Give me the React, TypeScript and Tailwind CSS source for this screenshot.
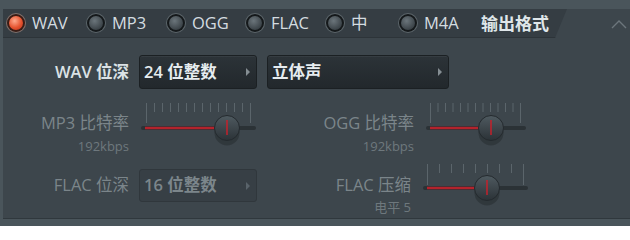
import React from "react";

type SliderProps = {
  width: number;
  ticks: number[];
  trackEnd: number;
  redEnd: number;
  knob: number;
  trackY: number;
  tallBottom: number;
};

function Slider({ width, ticks, trackEnd, redEnd, knob, trackY, tallBottom }: SliderProps) {
  return (
    <svg width={width} height={52} className="shrink-0">
      <defs>
        <linearGradient id="knobFill" x1="0" y1="0" x2="0" y2="1">
          <stop offset="0" stopColor="#4f5a60" />
          <stop offset="1" stopColor="#2b3237" />
        </linearGradient>
      </defs>
      {ticks.map((x, i) => (
        <line
          key={i}
          x1={x}
          x2={x}
          y1={2}
          y2={i === 0 || i === ticks.length - 1 ? tallBottom : 11}
          stroke="#5b656b"
          strokeWidth={1}
        />
      ))}
      <rect x={0} y={trackY - 2} width={trackEnd} height={4} rx={2} fill="#2b3236" />
      <rect x={4} y={trackY - 1.25} width={redEnd - 4} height={2.5} fill="#b3232c" />
      <circle cx={knob} cy={trackY + 5} r={12.5} fill="#000" opacity={0.2} />
      <circle cx={knob} cy={trackY} r={12.5} fill="url(#knobFill)" stroke="#242a2e" strokeWidth={1} />
      <line x1={knob} x2={knob} y1={trackY - 8} y2={trackY + 7} stroke="#c4212b" strokeWidth={1.5} />
    </svg>
  );
}

function Radio({ label, active, w }: { label: string; active?: boolean; w: string }) {
  return (
    <div className={`flex items-center gap-[6px] ${w}`}>
      <span
        className={`flex h-5 w-5 items-center justify-center rounded-full ${
          active ? "bg-[#7d706c]" : "bg-[#5b6469]"
        }`}
      >
        <span
          className={`flex h-[18px] w-[18px] items-center justify-center rounded-full ${
            active ? "bg-[#3b1c15]" : "bg-[#15191b]"
          }`}
        >
          <span
            className={`h-[14px] w-[14px] rounded-full ${
              active
                ? "bg-[radial-gradient(circle_at_40%_35%,#ffa98c,#e5532f_55%,#b5301a)]"
                : "bg-[radial-gradient(circle_at_40%_35%,#6b757b,#3c4449_70%,#30373b)]"
            }`}
          />
        </span>
      </span>
      <span className="text-[16.5px] leading-none text-[#d4dce0]">{label}</span>
    </div>
  );
}

function Dropdown({ text, w, disabled }: { text: string; w: string; disabled?: boolean }) {
  return (
    <div
      className={`flex h-full items-center justify-between rounded-[3px] border pl-[4px] pr-[6px] ${w} ${
        disabled
          ? "border-[#30373c] bg-[#373f45]"
          : "border-[#1b2023] bg-[linear-gradient(#2c3338,#22282c)] shadow-[inset_0_1px_0_rgba(255,255,255,0.05)]"
      }`}
    >
      <span
        className={`text-[16.5px] font-semibold leading-none ${
          disabled ? "text-[#7c868b]" : "text-[#e6ecef]"
        }`}
      >
        {text}
      </span>
      <svg width="4" height="8" viewBox="0 0 4 8">
        <path d="M0 0 L4 4 L0 8 Z" fill={disabled ? "#59636a" : "#858e93"} />
      </svg>
    </div>
  );
}

export default function App() {
  return (
    <div className="h-[226px] w-[630px] overflow-hidden bg-[#4a555b] pl-[3px] pt-[9px] font-['Open_Sans','Noto_Sans_CJK_SC',sans-serif]">
      <div className="border-b border-[#30383d] bg-[#3d464c]">
        <div className="flex h-[29px]">
          <div className="flex w-[564px] items-center border-b border-[#2d3439] bg-[#353d43] pl-[3px] [clip-path:polygon(0_0,100%_0,calc(100%-12px)_100%,0_100%)]">
            <Radio label="WAV" active w="w-[80px]" />
            <Radio label="MP3" w="w-[80px]" />
            <Radio label="OGG" w="w-[79px]" />
            <Radio label="FLAC" w="w-[80px]" />
            <Radio label="中" w="w-[73px]" />
            <Radio label="M4A" w="w-[83px]" />
            <span className="text-[17px] font-bold leading-none text-[#dfe6e9]">输出格式</span>
          </div>
          <div className="flex flex-1 items-center justify-end pr-[3px]">
            <svg width="16" height="10" viewBox="0 0 16 10">
              <polyline points="1,9 8,2 15,9" fill="none" stroke="#6c767c" strokeWidth="1.4" />
            </svg>
          </div>
        </div>

        <div className="pb-[3px] pt-[17px]">
          <div className="flex h-[34px] items-center">
            <div className="w-[126px] text-right text-[16.5px] font-semibold text-[#dbe2e5]">WAV 位深</div>
            <div className="ml-[10px] h-full">
              <Dropdown text="24 位整数" w="w-[118px]" />
            </div>
            <div className="ml-[10px] h-full">
              <Dropdown text="立体声" w="w-[182px]" />
            </div>
          </div>

          <div className="mt-[12px] flex">
            <div className="w-[126px] pt-[12px] text-right">
              <div className="text-[16.5px] leading-[20px] text-[#7b858a]">MP3 比特率</div>
              <div className="mt-[5px] text-[13px] leading-[16px] text-[#6e787d]">192kbps</div>
            </div>
            <div className="ml-[12px]">
              <Slider
                width={116}
                ticks={Array.from({ length: 14 }, (_, i) => 5.5 + i * 8)}
                trackEnd={115}
                redEnd={74}
                knob={86}
                trackY={27}
                tallBottom={22}
              />
            </div>
            <div className="w-[157px] pt-[12px] text-right">
              <div className="text-[16.5px] leading-[20px] text-[#7b858a]">OGG 比特率</div>
              <div className="mt-[5px] text-[13px] leading-[16px] text-[#6e787d]">192kbps</div>
            </div>
            <div className="ml-[12px]">
              <Slider
                width={101}
                ticks={Array.from({ length: 13 }, (_, i) => 4.5 + i * 7.5)}
                trackEnd={100}
                redEnd={54}
                knob={65}
                trackY={27}
                tallBottom={22}
              />
            </div>
          </div>

          <div className="mt-[8px] flex">
            <div className="w-[126px] pt-[13px] text-right text-[16.5px] leading-[20px] text-[#7b858a]">FLAC 位深</div>
            <div className="ml-[10px] mt-[7px] h-[33px]">
              <Dropdown text="16 位整数" w="w-[118px]" disabled />
            </div>
            <div className="w-[154px] pt-[13px] text-right">
              <div className="text-[16.5px] leading-[20px] text-[#7b858a]">FLAC 压缩</div>
              <div className="mt-[4px] text-[13px] leading-[16px] text-[#6e787d]">电平 5</div>
            </div>
            <div className="ml-[12px]">
              <Slider
                width={106}
                ticks={Array.from({ length: 9 }, (_, i) => 4.5 + i * 12)}
                trackEnd={105}
                redEnd={54}
                knob={64}
                trackY={26}
                tallBottom={23}
              />
            </div>
          </div>
        </div>
      </div>
    </div>
  );
}
